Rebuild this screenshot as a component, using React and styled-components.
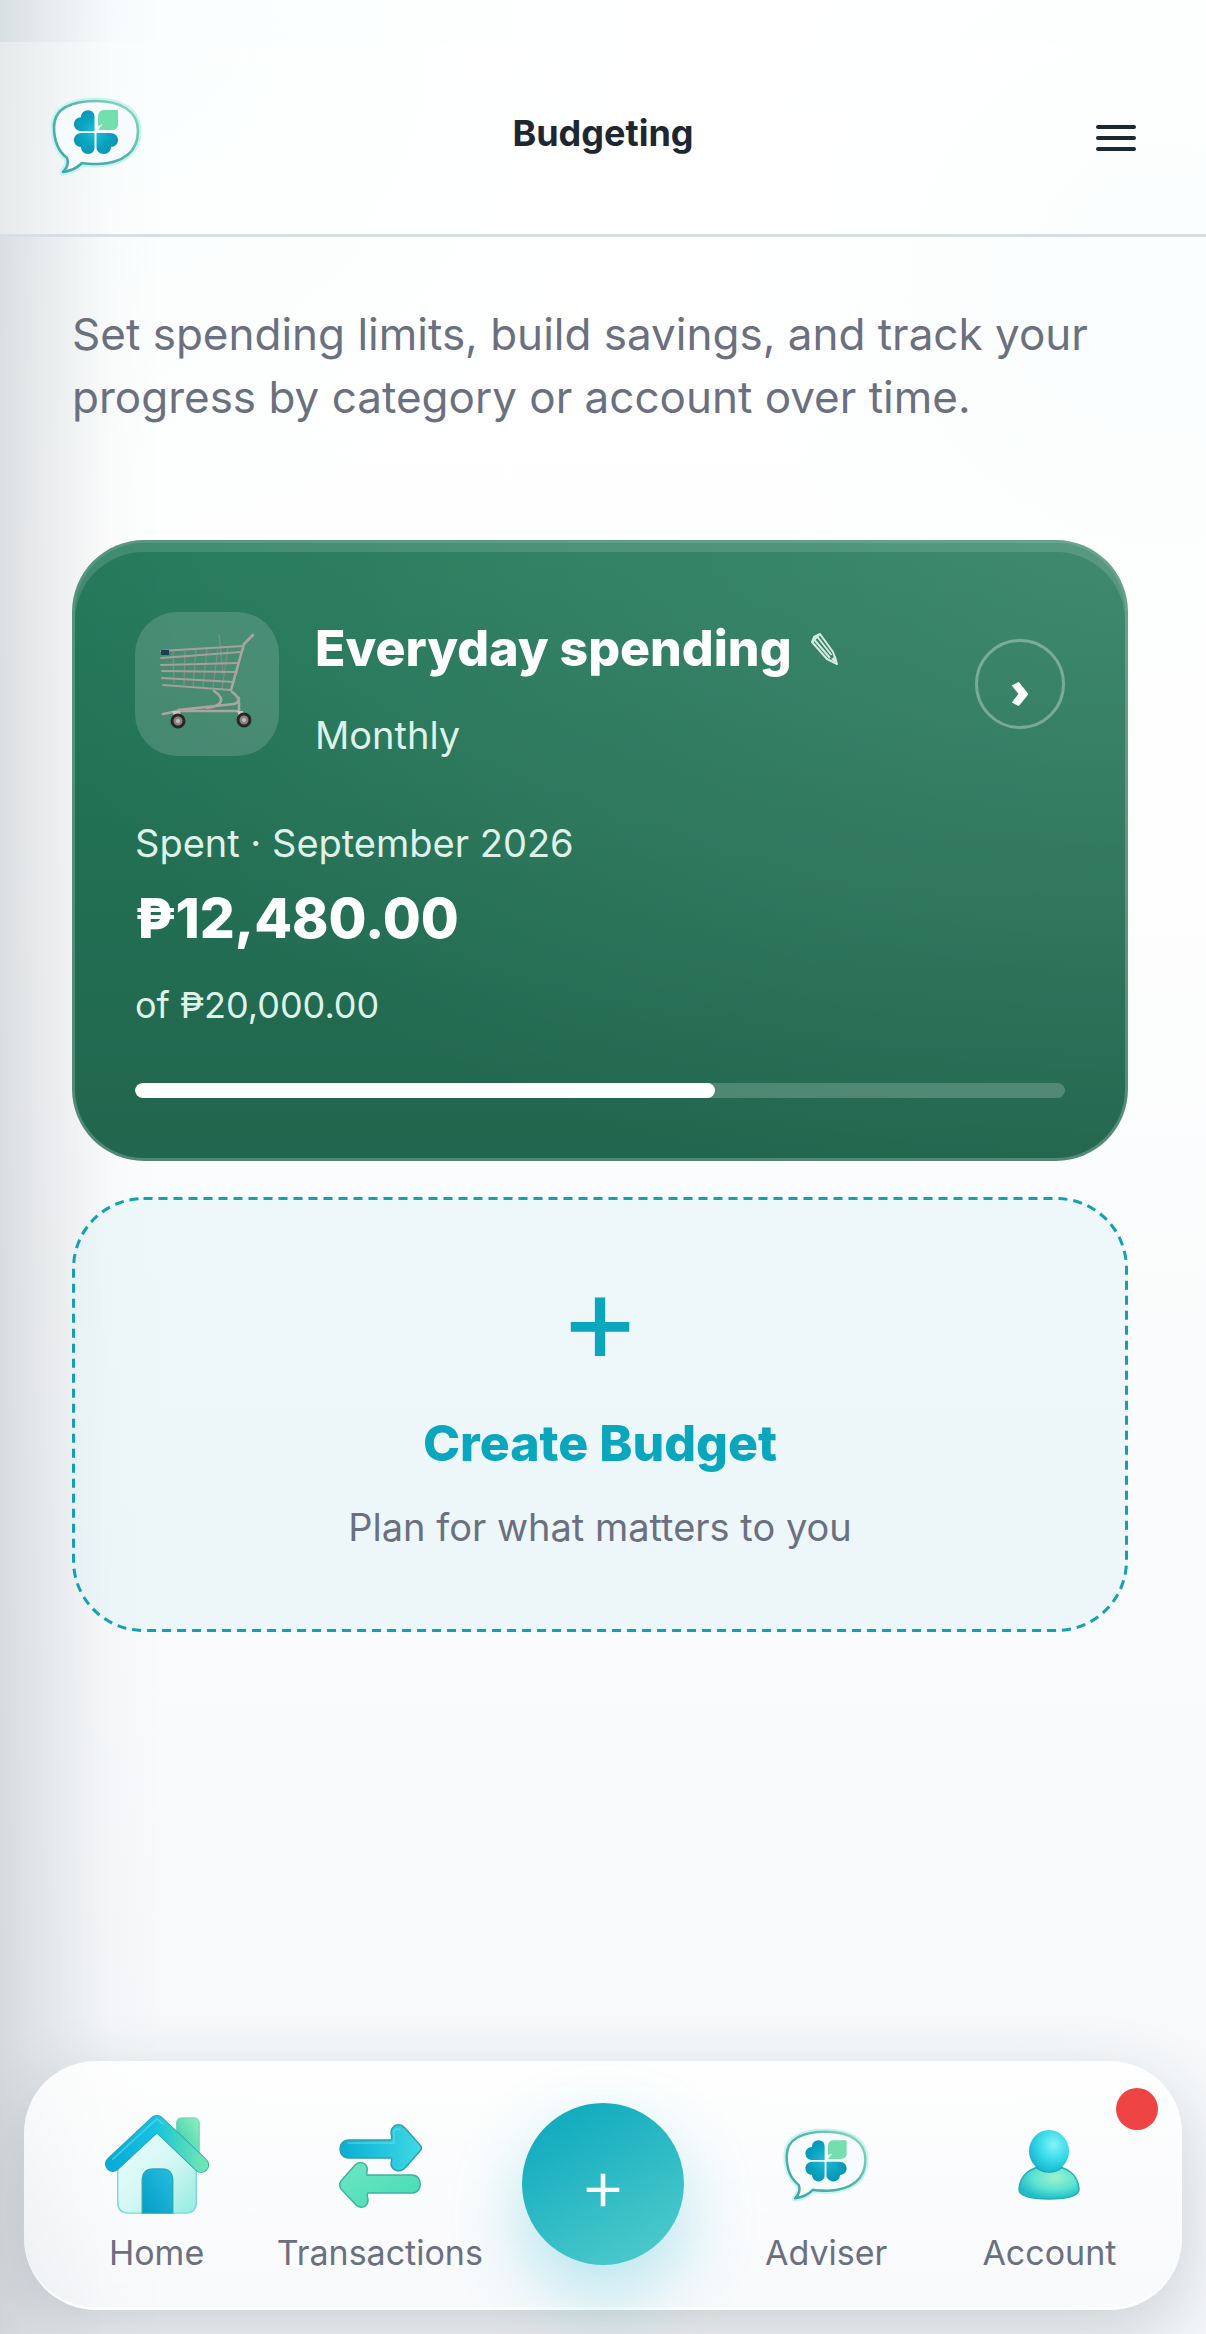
import React, { useId } from "react";
import styled, { createGlobalStyle } from "styled-components";

const GlobalStyle = createGlobalStyle`
  *, *::before, *::after { box-sizing: border-box; }
  body {
    margin: 0;
    font-family: Inter, "Open Sans", sans-serif;
    color: #6b7080;
    background: #fff;
  }
  h1, h2, p { margin: 0; }
  button { font: inherit; color: inherit; background: none; border: 0; padding: 0; cursor: pointer; }
  a { color: inherit; text-decoration: none; }
`;

const Page = styled.div`
  min-height: 100vh;
  display: flex;
  flex-direction: column;
  background:
    linear-gradient(90deg, rgba(60, 80, 90, 0.18) 0, rgba(70, 80, 94, 0.12) 36px, rgba(70, 80, 98, 0.07) 72px, rgba(80, 90, 110, 0.025) 108px, transparent 162px),
    radial-gradient(circle at 96% 260px, rgba(228, 252, 252, 0.2) 0, transparent 420px),
    radial-gradient(circle at 8% 0, rgba(222, 252, 250, 0.2) 0, transparent 540px),
    linear-gradient(180deg, #fff 0, #fefefe 36%, #f9fbfc 65%, #f5f7f9 100%);
`;

const Header = styled.header`
  display: grid;
  grid-template-columns: 1fr auto 1fr;
  align-items: start;
  padding: 54px 48px;
  margin-top: 42px;
  background: rgba(255, 255, 255, 0.35);
  border-bottom: 3px solid #d8dfe2;
`;

const Brand = styled.a`
  display: flex;
  justify-self: start;
`;

const PageTitle = styled.h1`
  font-size: 36px;
  line-height: 75px;
  font-weight: 700;
  color: #1d2731;
`;

const MenuButton = styled.button`
  display: flex;
  flex-direction: column;
  align-items: center;
  justify-content: center;
  gap: 7px;
  width: 84px;
  height: 84px;
  justify-self: end;
`;

const MenuLine = styled.span`
  width: 40px;
  height: 4px;
  border-radius: 2px;
  background: #1d2731;
`;

const Main = styled.main`
  display: flex;
  flex-direction: column;
  padding: 66px 78px 72px 72px;
`;

const Intro = styled.p`
  font-size: 44px;
  line-height: 63px;
  margin-bottom: 111px;
`;

const BudgetCard = styled.article`
  padding: 69px 60px 60px;
  border: 3px solid rgba(255, 255, 255, 0.22);
  border-radius: 72px;
  color: #fff;
  background:
    radial-gradient(ellipse at 100% 0, rgba(255, 255, 255, 0.13) 0, rgba(255, 255, 255, 0.06) 45%, transparent 76%),
    linear-gradient(180deg, #23795a 0, #21664e 100%);
  background-origin: border-box;
  box-shadow: inset 0 9px 0 rgba(255, 255, 255, 0.13);
`;

const CardTop = styled.div`
  display: flex;
  align-items: flex-start;
  gap: 36px;
`;

const IconTile = styled.div`
  flex: none;
  width: 144px;
  height: 144px;
  border-radius: 42px;
  background: rgba(255, 255, 255, 0.15);
`;

const CardHeading = styled.div`
  flex: 1;
  display: flex;
  flex-direction: column;
  gap: 24px;
`;

const NameRow = styled.div`
  display: flex;
  align-items: center;
  gap: 18px;
`;

const CardName = styled.h2`
  font-size: 50px;
  line-height: 72px;
  font-weight: 800;
  color: ${(p) => p.$color || "#fff"};
`;

const EditButton = styled.button`
  display: flex;
`;

const CardText = styled.p`
  font-size: ${(p) => p.$size || 38}px;
  line-height: 54px;
  color: ${(p) => p.$color || "#dff2ea"};
`;

const OpenButton = styled.button`
  flex: none;
  display: flex;
  align-items: center;
  justify-content: center;
  width: 90px;
  height: 90px;
  margin-top: 27px;
  padding-top: 9px;
  border: 3px solid rgba(255, 255, 255, 0.32);
  border-radius: 50%;
  font-family: "Open Sans", sans-serif;
  font-size: 50px;
  line-height: 60px;
  font-weight: 800;
`;

const Amounts = styled.div`
  display: flex;
  flex-direction: column;
  padding-top: 54px;
`;

const Amount = styled.p`
  font-size: 55px;
  line-height: 72px;
  font-weight: 800;
  padding: 12px 0 24px;
`;

const Track = styled.div`
  height: 15px;
  margin-top: 51px;
  border-radius: 8px;
  background: rgba(255, 255, 255, 0.2);
  overflow: hidden;
`;

const Fill = styled.div`
  height: 100%;
  border-radius: 8px;
  background: #fff;
`;

const CreateCard = styled.button`
  position: relative;
  display: flex;
  flex-direction: column;
  align-items: center;
  margin-top: 36px;
  padding: 72px 63px 78px;
  border-radius: 72px;
  background: rgba(226, 243, 248, 0.52);
`;

const DashedOutline = styled.svg`
  position: absolute;
  inset: 0;
  width: 100%;
  height: 100%;
  overflow: visible;
  pointer-events: none;

  rect {
    x: 1.5px;
    y: 1.5px;
    width: calc(100% - 3px);
    height: calc(100% - 3px);
    fill: none;
    stroke: #14a0b0;
    stroke-width: 3px;
    stroke-dasharray: 9 6;
  }
`;

const PlusSign = styled.span`
  font-size: ${(p) => p.$size}px;
  line-height: 96px;
  font-weight: ${(p) => p.$weight};
  color: ${(p) => p.$color};
`;

const CreateTitle = styled(CardName).attrs({ as: "span" })`
  padding: 42px 0 21px;
`;

const Nav = styled.nav`
  display: grid;
  grid-template-columns: repeat(5, 1fr);
  margin: auto 24px 24px;
  padding: 42px 21px 30px;
  border-radius: 72px;
  background: linear-gradient(180deg, rgba(255, 255, 255, 0.84), rgba(250, 251, 253, 0.56));
  border-bottom: 3px solid rgba(255, 255, 255, 0.85);
  box-shadow: 0 24px 72px rgba(40, 56, 72, 0.2);
`;

const NavLink = styled.a`
  position: relative;
  display: flex;
  flex-direction: column;
  align-items: center;
  gap: 9px;
  padding-top: 9px;
  font-size: 34px;
  line-height: 48px;
`;

const NavIcon = styled.span`
  display: flex;
  align-items: center;
  justify-content: center;
  height: 108px;
`;

const AddButton = styled.button`
  justify-self: center;
  display: flex;
  align-items: center;
  justify-content: center;
  width: 162px;
  height: 162px;
  border-radius: 50%;
  background: linear-gradient(150deg, #0fabbf 10%, #50cbcb 95%);
  box-shadow: 0 30px 72px rgba(20, 180, 205, 0.3);
`;

const Badge = styled.span`
  position: absolute;
  top: -15px;
  right: 3px;
  width: 42px;
  height: 42px;
  border-radius: 50%;
  background: #ef4444;
`;

function CloverLogo({ width = 96 }) {
  const id = useId();
  return (
    <svg width={width} viewBox="0 0 96 84" aria-hidden="true">
      <defs>
        <linearGradient id={id + "o"} x1="0" y1="1" x2="1" y2="0">
          <stop offset="0" stopColor="#3fa5a6" />
          <stop offset=".55" stopColor="#57b3a8" />
          <stop offset="1" stopColor="#93dcc0" />
        </linearGradient>
        <radialGradient id={id + "l"} gradientUnits="userSpaceOnUse" cx="47" cy="36" r="25">
          <stop offset="0" stopColor="#1fbdda" />
          <stop offset=".6" stopColor="#0aa3bf" />
          <stop offset="1" stopColor="#0794b4" />
        </radialGradient>
      </defs>
      <path d="M6 31C6 12 24 5 48 5c25 0 42 10 42 30 0 21-15 32-40 33-6 0-11 0-16-1-5 5-11 8-19 9 4-4 6-9 4-14C10 55 6 44 6 31Z" fill="#f8fcfe" stroke="#c5f5f1" strokeWidth="7" strokeLinejoin="round" />
      <path d="M6 31C6 12 24 5 48 5c25 0 42 10 42 30 0 21-15 32-40 33-6 0-11 0-16-1-5 5-11 8-19 9 4-4 6-9 4-14C10 55 6 44 6 31Z" fill="#f8fbfe" stroke={`url(#${id}o)`} strokeWidth="2.600" strokeLinejoin="round" />
      <g fill={`url(#${id}l)`}>
        <path d="M46.500 35.200H34c-5 0-8-3-8-7s3-7 7-7c0-4 3-7 7-7s6.500 3 6.500 6Z" />
        <path d="M46.500 37H34c-5 0-8 3-8 7s3 7 7 7c0 4 3 7 7 7s6.500-3 6.500-6Z" />
        <path d="M48.500 37H62c5 0 8 3 8 7s-3 7-7 7c0 4-3 7-7 7s-7.500-3-7.500-6Z" />
      </g>
      <path d="M56 14h14v14c0 4-2 6-6 6H50l5-6-5 2v-9c0-4 2-7 6-7Z" fill="#72dfad" />
    </svg>
  );
}

function CartIcon() {
  return (
    <svg width="144" height="144" viewBox="0 0 144 144" fill="none" aria-hidden="true">
      <g stroke="#7f8f88" strokeWidth="1.200">
        <path d="M38 40 39 71M50 39l-1 34M61 38l-3 36M72 37l-4 38M83 36l-5 40M93 35l-6 42M84 22l4 40" />
      </g>
      <g stroke="#a79f9c" strokeWidth="1.800" strokeLinecap="round">
        <path d="M26 39 108 34M26 46l80-6M26 53l78-2M27 59l75 1M27 66l72 4M28 73l68 5" />
      </g>
      <g stroke="#aca4a1" strokeWidth="2.600" strokeLinecap="round" strokeLinejoin="round">
        <path d="M118 23 109 32 96 78" />
        <path d="M79 79c6 4 9 8 6 12-2 3-7 4-13 5" />
        <path d="M97 80c6 4 7 8 7 11v8H43l-15 3M43 98l56-6c4-1 5-3 5-6" />
      </g>
      <path d="M26 38h8v5h-8Z" fill="#1c3f52" />
      <path d="M37 99h8l2 10h-6ZM102 99h6l4 10h-6Z" fill="#c9c3c1" />
      <g fill="#8d8183" stroke="#272727" strokeWidth="3">
        <circle cx="43" cy="109" r="6" />
        <circle cx="109" cy="108" r="6" />
      </g>
      <g fill="#c4bdbc">
        <circle cx="43" cy="109" r="2" />
        <circle cx="109" cy="108" r="2" />
      </g>
    </svg>
  );
}

function PencilIcon() {
  return (
    <svg width="30" height="36" viewBox="0 0 30 36" fill="none" aria-hidden="true">
      <g stroke="#d5ebe2" strokeWidth="2" strokeLinejoin="round">
        <path d="M2 12 10 4l13 18 4 12-10-5Z" />
        <path d="M4.500 10 20 28M7.500 7l14 18M2 12l2-5 6-3" />
      </g>
      <path d="m21 29 6 5-1-8Z" fill="#d5ebe2" />
    </svg>
  );
}

function HomeIcon() {
  return (
    <svg width="106" height="106" viewBox="0 0 108 108" aria-hidden="true">
      <defs>
        <linearGradient id="homeRoof" x1="0" y1="0" x2="1" y2="0">
          <stop offset="0" stopColor="#0aabd8" />
          <stop offset=".5" stopColor="#17c3df" />
          <stop offset=".72" stopColor="#3cd3c4" />
          <stop offset="1" stopColor="#6ce3b4" />
        </linearGradient>
        <linearGradient id="homeWall" x1="0" y1="0" x2="1" y2="1">
          <stop offset="0" stopColor="#e9fcfa" />
          <stop offset=".5" stopColor="#d6f8f5" />
          <stop offset="1" stopColor="#93ece0" />
        </linearGradient>
        <linearGradient id="homeDoor" x1="0" y1="1" x2="1" y2="0">
          <stop offset="0" stopColor="#069bc4" />
          <stop offset="1" stopColor="#25bfdf" />
        </linearGradient>
        <linearGradient id="homeChimney" x1="0" y1="1" x2="1" y2="0">
          <stop offset="0" stopColor="#2fc9a5" />
          <stop offset="1" stopColor="#92efc4" />
        </linearGradient>
      </defs>
      <path d="M74 10c0-3 2-5 5-5h13c3 0 5 2 5 5v35L74 24Z" fill="url(#homeChimney)" stroke="#67cdb2" />
      <path d="M54 20 14 55v36c0 7 4 11 11 11h58c7 0 11-4 11-11V55Z" fill="url(#homeWall)" stroke="#7fd9d6" strokeWidth="1.500" />
      <path d="M39 102V69c0-8 4-12 11-12h9c7 0 11 4 11 12v33Z" fill="url(#homeDoor)" stroke="#2aa9b9" strokeWidth="1.500" />
      <path d="M9 52 54 10l45 43" fill="none" stroke="#239fb0" strokeWidth="16" strokeLinecap="round" strokeLinejoin="round" />
      <path d="M9 52 54 10l45 43" fill="none" stroke="url(#homeRoof)" strokeWidth="14.500" strokeLinecap="round" strokeLinejoin="round" />
      <path d="M9 47 54 6l6 5" fill="none" stroke="#6be2ee" strokeWidth="2" strokeLinecap="round" opacity=".5" />
    </svg>
  );
}

function TransferIcon() {
  return (
    <svg width="90" height="90" viewBox="0 0 90 90" aria-hidden="true">
      <defs>
        <linearGradient id="arrowOut" x1="0" y1="0" x2="1" y2="0">
          <stop offset="0" stopColor="#0aaed4" />
          <stop offset="1" stopColor="#3fd9e6" />
        </linearGradient>
        <linearGradient id="arrowIn" x1="0" y1="0" x2="1" y2="1">
          <stop offset="0" stopColor="#6fe6c3" />
          <stop offset="1" stopColor="#43dbb6" />
        </linearGradient>
      </defs>
      <path d="M14 19h42c2-3 0-4 0-8 1-7 8-10 14-4l15 17c2 2 2 4 0 6L70 47c-5 5-13 3-14-4 0-3 2-4 0-6H14c-12 0-12-18 0-18Z" fill="url(#arrowOut)" stroke="#2c9fb2" strokeWidth="1.500" />
      <path d="M77 54H32c-1-3 1-4 0-8-2-5-8-6-12-2L6 60c-2 3-2 5 0 8l15 16c6 5 12 1 12-5 0-3-2-5 0-7h44c11 0 11-18 0-18Z" fill="url(#arrowIn)" stroke="#3eb39e" strokeWidth="1.500" />
      <path d="M13 22h46V12c0-4 3-5 6-3" fill="none" stroke="#7be8f0" strokeWidth="1.500" strokeLinecap="round" opacity=".5" />
    </svg>
  );
}

function PersonIcon() {
  return (
    <svg width="66" height="78" viewBox="0 0 66 78" aria-hidden="true">
      <defs>
        <radialGradient id="personHead" cx=".62" cy=".35" r=".7">
          <stop offset="0" stopColor="#85f2f7" />
          <stop offset=".5" stopColor="#3bdcea" />
          <stop offset="1" stopColor="#14b3cf" />
        </radialGradient>
        <radialGradient id="personBody" cx=".6" cy=".35" r=".65">
          <stop offset="0" stopColor="#9df3cb" />
          <stop offset=".55" stopColor="#5fe4d2" />
          <stop offset="1" stopColor="#20bdc9" />
        </radialGradient>
      </defs>
      <path d="M3 62C4 48 14 39 33 39s29 9 30 23c0 7-10 10-30 10S3 69 3 62Z" fill="url(#personBody)" stroke="#25aeb5" strokeWidth="1.500" />
      <path d="M20 39c8 7 18 7 26 0" fill="none" stroke="#179cab" strokeWidth="3" />
      <ellipse cx="33" cy="24" rx="20" ry="21" fill="url(#personHead)" />
    </svg>
  );
}

export default function App() {
  const spent = 12480;
  const limit = 20000;
  return (
    <Page>
      <GlobalStyle />
      <Header>
        <Brand href="#home" aria-label="Home page"><CloverLogo /></Brand>
        <PageTitle>Budgeting</PageTitle>
        <MenuButton aria-label="Menu"><MenuLine /><MenuLine /><MenuLine /></MenuButton>
      </Header>
      <Main>
        <Intro>Set spending limits, build savings, and track your progress by category or account over time.</Intro>
        <BudgetCard>
          <CardTop>
            <IconTile><CartIcon /></IconTile>
            <CardHeading>
              <NameRow>
                <CardName>Everyday spending</CardName>
                <EditButton aria-label="Rename budget"><PencilIcon /></EditButton>
              </NameRow>
              <CardText>Monthly</CardText>
            </CardHeading>
            <OpenButton aria-label="Open budget">›</OpenButton>
          </CardTop>
          <Amounts>
            <CardText>Spent · September 2026</CardText>
            <Amount>₱12,480.00</Amount>
            <CardText $size={36}>of ₱20,000.00</CardText>
          </Amounts>
          <Track role="progressbar" aria-label="Budget spent" aria-valuemin={0} aria-valuemax={limit} aria-valuenow={spent}>
            <Fill style={{ width: `${(spent / limit) * 100}%` }} />
          </Track>
        </BudgetCard>
        <CreateCard>
          <DashedOutline aria-hidden="true"><rect rx="70" /></DashedOutline>
          <PlusSign $size={124} $weight={400} $color="#0aa6bd">+</PlusSign>
          <CreateTitle $color="#0aa6bd">Create Budget</CreateTitle>
          <CardText as="span" $color="#6b7080">Plan for what matters to you</CardText>
        </CreateCard>
      </Main>
      <Nav aria-label="Main">
        <NavLink href="#home"><NavIcon><HomeIcon /></NavIcon>Home</NavLink>
        <NavLink href="#transactions"><NavIcon><TransferIcon /></NavIcon>Transactions</NavLink>
        <AddButton aria-label="Add"><PlusSign $size={72} $weight={300} $color="#fff">+</PlusSign></AddButton>
        <NavLink href="#adviser"><NavIcon><CloverLogo width={90} /></NavIcon>Adviser</NavLink>
        <NavLink href="#account"><NavIcon><PersonIcon /></NavIcon>Account<Badge /></NavLink>
      </Nav>
    </Page>
  );
}
